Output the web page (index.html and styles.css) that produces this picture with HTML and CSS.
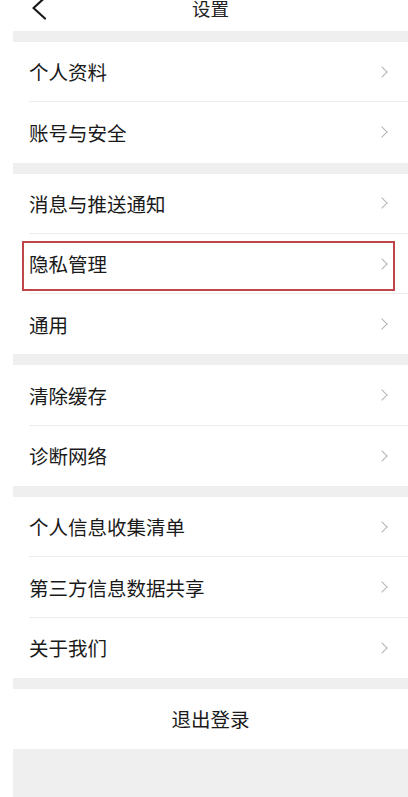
FILE: index.html
```html
<!DOCTYPE html>
<html lang="zh-CN">
<head>
  <meta charset="UTF-8" />
  <title>设置</title>
  <meta name="viewport" content="width=device-width, initial-scale=1.0" />
  <link rel="stylesheet" href="styles.css">
</head>
<body>
  <div class="page">
    <header class="topbar">
      <div class="nav">
        <svg class="back" width="18" height="24" viewBox="0 0 18 24">
          <path d="M14 1.5 L2.5 12 L14 22.5" fill="none" stroke="#1a1a1a" stroke-width="2.2" stroke-linecap="round" stroke-linejoin="round"/>
        </svg>
        <span class="title">设置</span>
      </div>
    </header>

    <!-- 账户 -->
    <div class="group">
      <div class="row"><span>个人资料</span><i class="arrow"></i></div>
      <div class="row"><span>账号与安全</span><i class="arrow"></i></div>
    </div>

    <!-- 通知 / 隐私 -->
    <div class="group">
      <div class="row"><span>消息与推送通知</span><i class="arrow"></i></div>
      <div class="row marked"><span>隐私管理</span><i class="arrow"></i></div>
      <div class="row"><span>通用</span><i class="arrow"></i></div>
    </div>

    <div class="group">
      <div class="row"><span>清除缓存</span><i class="arrow"></i></div>
      <div class="row"><span>诊断网络</span><i class="arrow"></i></div>
    </div>

    <div class="group">
      <div class="row"><span>个人信息收集清单</span><i class="arrow"></i></div>
      <div class="row"><span>第三方信息数据共享</span><i class="arrow"></i></div>
      <div class="row"><span>关于我们</span><i class="arrow"></i></div>
    </div>

    <div class="group">
      <div class="logout">退出登录</div>
    </div>
  </div>
</body>
</html>
```

FILE: styles.css
```css
body {
  margin: 0;
  background: #ffffff;
  font-family: "Noto Sans CJK SC", "Noto Sans", sans-serif;
  color: #1a1a1a;
}
.page {
  margin-left: 13px;
  min-height: 100vh;
  background: #efefef;
}
.topbar {
  height: 31px;
  overflow: hidden;
  background: #ffffff;
}
.nav {
  height: 46px;
  margin-top: -15px;
  display: flex;
  align-items: center;
  justify-content: center;
  position: relative;
}
.back {
  position: absolute;
  left: 18px;
  top: 11px;
}
.title {
  font-size: 18.5px;
  color: #222;
}
.group {
  background: #ffffff;
  margin-top: 11px;
}
.row {
  height: 60.3px;
  box-sizing: border-box;
  margin-left: 16px;
  padding-right: 20px;
  display: flex;
  align-items: center;
  justify-content: space-between;
  border-bottom: 1px solid #ededed;
  font-size: 19.5px;
  position: relative;
}
.row:last-child {
  border-bottom: none;
}
.arrow {
  width: 7px;
  height: 7px;
  border-top: 1.4px solid #b3b3b3;
  border-right: 1.4px solid #b3b3b3;
  transform: rotate(45deg);
  margin-right: 2px;
}
.marked::after {
  content: "";
  position: absolute;
  left: -7px;
  right: 13px;
  top: 7px;
  bottom: 2px;
  border: 2px solid #c0454a;
}
.logout {
  height: 60px;
  display: flex;
  align-items: center;
  justify-content: center;
  font-size: 19.5px;
}
```
